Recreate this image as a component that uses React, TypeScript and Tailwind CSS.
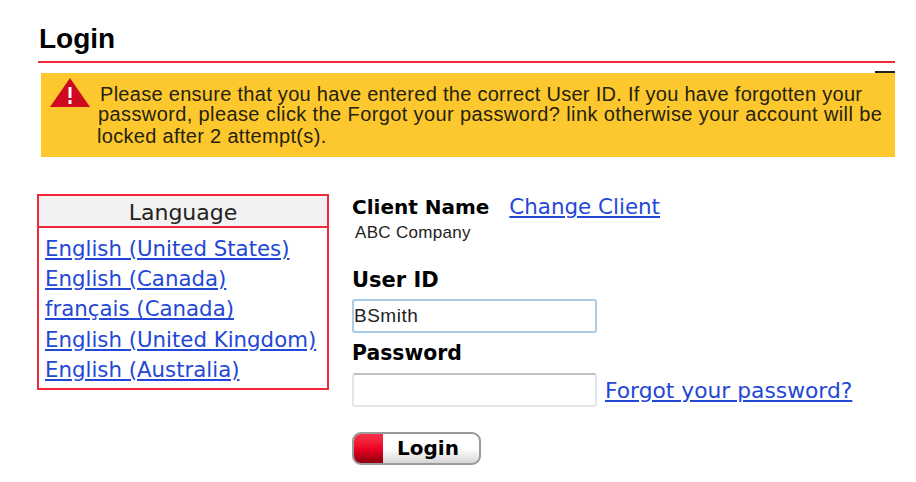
export default function App() {
  const verdana = "font-['DejaVu_Sans',sans-serif]";
  const link = "text-[#2347d6] underline underline-offset-2";
  const langs = ["English (United States)", "English (Canada)", "français (Canada)", "English (United Kingdom)", "English (Australia)"];
  return (
    <div className="w-[916px] h-[482px] overflow-hidden bg-white text-black pl-[38px] pr-[21px] pt-[22px] font-['Liberation_Sans',sans-serif]">
      <h1 className="text-[28px] leading-[34px] font-bold pl-px h-[39px]">Login</h1>
      <div className="h-[2px] bg-[#f5283c]" />
      <div className="relative ml-[3px] mt-[10px] h-[84px] bg-[#fdc82d] flex text-[#26220f] text-[20px]">
        <span className="absolute right-0 -top-[2px] w-[20px] h-[2px] bg-[#222]" />
        <svg className="ml-[9px] mt-[5px] shrink-0" width="40" height="30" viewBox="0 0 40 30">
          <path d="M20 0 L40 29 L0 29 Z" fill="#cf0a1e" />
          <rect x="18.5" y="9" width="3" height="11" fill="#fff" />
          <rect x="18.5" y="22" width="3" height="4" fill="#fff" />
        </svg>
        <div className="ml-[7px] pt-[11px] whitespace-nowrap">
          <div className="pl-[3px] tracking-[0.29px] leading-[20px]">Please ensure that you have entered the correct User ID. If you have forgotten your</div>
          <div className="pl-px tracking-[0.39px] leading-[20px]">password, please click the Forgot your password? link otherwise your account will be</div>
          <div className="tracking-[0.32px] leading-[24px]">locked after 2 attempt(s).</div>
        </div>
      </div>
      <div className={`flex mt-[37px] ${verdana}`}>
        <div className="-ml-px w-[292px] h-[196px] border-2 border-[#f0283c] shrink-0">
          <div className="h-[32px] bg-[#f2f2f2] border-b-2 border-[#f0283c] text-center text-[22px] leading-[34px] text-[#222]">Language</div>
          <ul className="pl-[6px] pt-[6px] text-[21.3px] leading-[30.2px]">
            {langs.map((l) => (
              <li key={l}><a className={link}>{l}</a></li>
            ))}
          </ul>
        </div>
        <div className="ml-[23px] flex flex-col">
          <div className="flex items-baseline h-[28px] text-[20px] leading-[26px]">
            <span className="font-bold">Client Name</span>
            <a className={`${link} ml-[20px] text-[21.4px]`}>Change Client</a>
          </div>
          <div className="pl-[3px] text-[17px] tracking-[0.3px] leading-[22px] text-[#222] font-['Liberation_Sans',sans-serif]">ABC Company</div>
          <div className="mt-[23px] font-bold text-[21px] leading-[26px]">User ID</div>
          <input
            readOnly
            value="BSmith"
            className="mt-[6px] w-[245px] h-[34px] rounded-[3px] border-2 border-[#a9cbe6] px-0 text-[19px] tracking-[0.5px] text-[#222] outline-none font-['Liberation_Sans',sans-serif]"
          />
          <div className="mt-[7px] font-bold text-[20.4px] leading-[26px]">Password</div>
          <div className="mt-[7px] flex items-end">
            <input readOnly className="w-[245px] h-[34px] rounded-[3px] border-2 border-[#e4e5ea] border-t-[#c0c0c4] outline-none" />
            <a className={`${link} ml-[8px] text-[21.8px] leading-[30px] -translate-y-[1px]`}>Forgot your password?</a>
          </div>
          <button className="mt-[25px] w-[129px] h-[33px] flex rounded-[9px] border-2 border-[#9a9a9a] overflow-hidden bg-gradient-to-b from-white via-white to-[#d6d6d6]">
            <span className="w-[29px] h-full bg-gradient-to-b from-[#f5304a] via-[#ee0022] to-[#8a0010]" />
            <span className="w-[90px] text-center text-[20px] leading-[29px] font-bold">Login</span>
          </button>
        </div>
      </div>
    </div>
  );
}
